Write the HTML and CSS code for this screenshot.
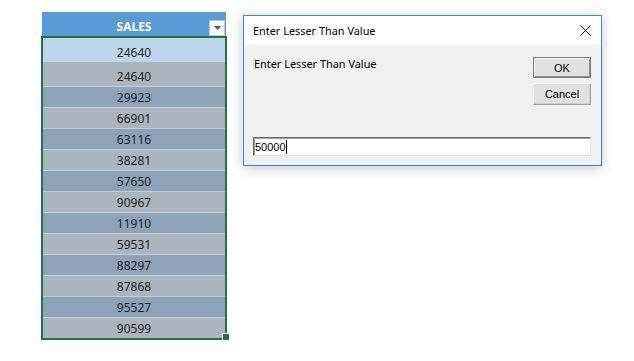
FILE: index.html
```html
<!DOCTYPE html>
<html lang="en">
<head>
  <meta charset="UTF-8">
  <meta name="viewport" content="width=device-width, initial-scale=1.0">
  <title>Enter Lesser Than Value</title>
  <link rel="stylesheet" href="styles.css">
</head>
<body>
  <div class="page">
    <div class="sheet">
      <div class="head">
        SALES
        <span class="filter">
          <svg width="7" height="4" viewBox="0 0 7 4"><path d="M0 0h7L3.5 4z" fill="#5a5a5a"/></svg>
        </span>
      </div>
      <div class="range">
        <div class="cell sel">24640</div>
        <div class="cell tall light">24640</div>
        <div class="cell dark">29923</div>
        <div class="cell light">66901</div>
        <div class="cell dark">63116</div>
        <div class="cell light">38281</div>
        <div class="cell dark">57650</div>
        <div class="cell light">90967</div>
        <div class="cell dark">11910</div>
        <div class="cell light">59531</div>
        <div class="cell dark">88297</div>
        <div class="cell light">87868</div>
        <div class="cell dark">95527</div>
        <div class="cell light">90599</div>
        <span class="handle"></span>
      </div>
    </div>

    <div class="dialog">
      <div class="titlebar">
        <span>Enter Lesser Than Value</span>
        <svg class="close" width="11" height="11" viewBox="0 0 11 11"><path d="M0.5 0.5l10 10M10.5 0.5l-10 10" stroke="#111" stroke-width="1"/></svg>
      </div>
      <div class="dialog-body">
        <div class="top">
          <p class="prompt">Enter Lesser Than Value</p>
          <div class="buttons">
            <button class="btn ok">OK</button>
            <button class="btn">Cancel</button>
          </div>
        </div>
        <div class="field">50000<span class="caret"></span></div>
      </div>
    </div>
  </div>
</body>
</html>
```

FILE: styles.css
```css
body {
  margin: 0;
  background: #fff;
  font-family: "Noto Sans", sans-serif;
  color: #1e1e1e;
}
.page {
  display: flex;
  align-items: flex-start;
  padding: 12px 0 0 41px;
}

/* spreadsheet column */
.sheet {
  width: 186px;
}
.head {
  position: relative;
  height: 24px;
  margin: 0 1px;
  padding-top: 6px;
  box-sizing: border-box;
  background: #5b9bd5;
  color: #fff;
  font-weight: bold;
  font-size: 12px;
  line-height: 18px;
  text-align: center;
}
.filter {
  position: absolute;
  right: 1px;
  bottom: 0;
  width: 16px;
  height: 16px;
  box-sizing: border-box;
  border: 1px solid #c8c8c8;
  background: #f7f7f7;
  display: flex;
  align-items: center;
  justify-content: center;
}
.range {
  position: relative;
  border: 2px solid #217346;
}
.cell {
  height: 21px;
  box-sizing: border-box;
  display: flex;
  align-items: flex-end;
  justify-content: center;
  font-size: 12px;
  line-height: 18px;
  border-bottom: 1px solid #c9cfd6;
}
.cell.sel {
  height: 24px;
  background: #bdd6ec;
  border-bottom: none;
}
.cell.tall {
  height: 25px;
}
.cell.light {
  background: #acb4bd;
}
.cell.dark {
  background: #8fa3b8;
}
.cell:last-of-type {
  height: 20px;
  border-bottom: none;
}
.handle {
  position: absolute;
  right: -5px;
  bottom: -3px;
  width: 6px;
  height: 6px;
  background: #217346;
  border: 1px solid #fff;
}

/* input box dialog */
.dialog {
  width: 359px;
  height: 151px;
  margin: 3px 0 0 16px;
  box-sizing: border-box;
  border: 1px solid #3c86d2;
  background: #f0f0f0;
  box-shadow: 0 2px 12px rgba(0, 0, 0, 0.22);
  display: flex;
  flex-direction: column;
}
.titlebar {
  height: 29px;
  background: #fff;
  display: flex;
  align-items: center;
  justify-content: space-between;
  padding: 0 10px 0 9px;
  font-size: 10.9px;
  color: #000;
}
.dialog-body {
  flex: 1;
  padding: 0 10px 0 9px;
}
.top {
  display: flex;
  justify-content: space-between;
  align-items: flex-start;
}
.prompt {
  margin: 11px 0 0 1px;
  font-size: 10.9px;
  line-height: 16px;
  color: #000;
}
.buttons {
  display: flex;
  flex-direction: column;
  gap: 5px;
  margin-top: 12px;
}
.btn {
  width: 58px;
  height: 22px;
  padding: 0;
  font-family: "Liberation Sans", Arial, sans-serif;
  font-size: 11px;
  color: #000;
  background: #e1e1e1;
  border: 1px solid;
  border-color: #fcfcfc #a0a0a0 #a0a0a0 #fcfcfc;
  box-shadow: inset -1px -1px 0 #cfcfcf;
}
.btn.ok {
  height: 21px;
  border-color: #7a7a7a;
  box-shadow: inset 1px 1px 0 #fff, inset -1px -1px 0 #8c8c8c;
}
.field {
  display: flex;
  align-items: center;
  height: 19px;
  margin-top: 32px;
  padding-left: 1px;
  box-sizing: border-box;
  background: #fff;
  border: 1px solid;
  border-color: #6a6a6a #e3e3e3 #e3e3e3 #6a6a6a;
  box-shadow: inset 1px 1px 0 #a0a0a0;
  font-family: "Liberation Sans", Arial, sans-serif;
  font-size: 11px;
  color: #000;
}
.caret {
  width: 1px;
  height: 14px;
  background: #000;
}
```
